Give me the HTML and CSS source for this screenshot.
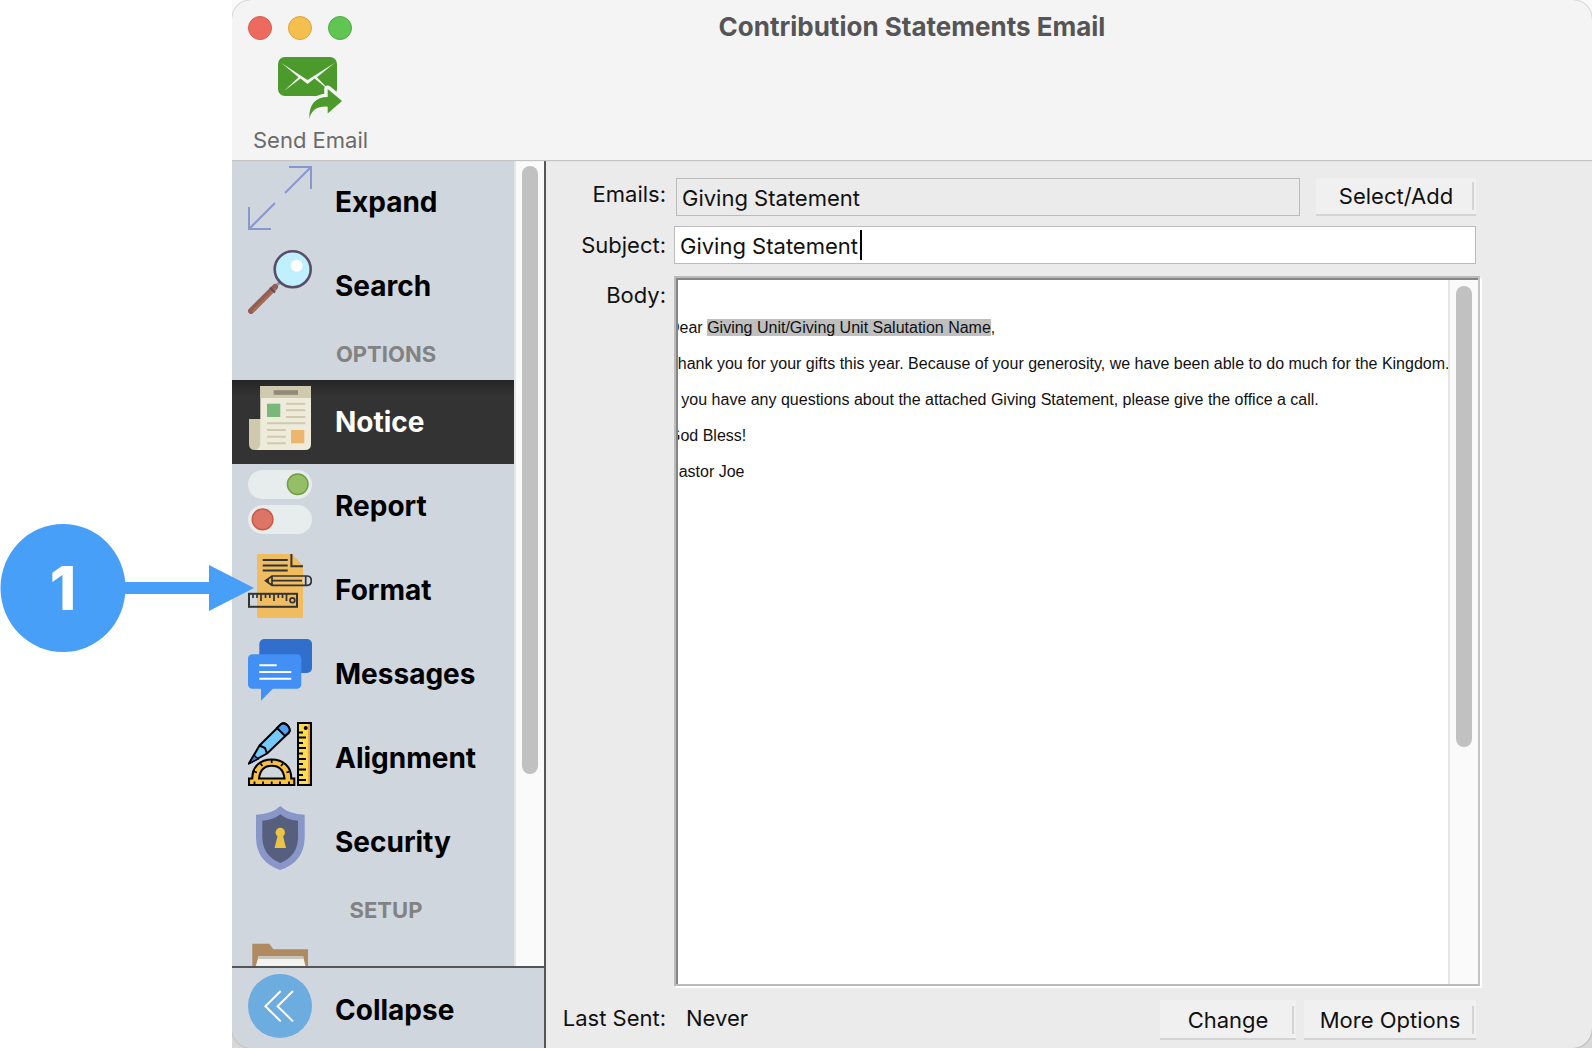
FILE: index.html
```html
<!DOCTYPE html>
<html lang="en">
<head>
    <meta charset="UTF-8">
    <meta name="viewport" content="width=device-width, initial-scale=1.0">
    <title>Contribution Statements Email</title>
    <link rel="stylesheet" href="styles.css">
</head>
<body>
    <div class="desktop">
    <div class="window">
        <header class="titlebar">
            <div class="title-row">
                <div class="lights">
                    <button type="button" class="light red" aria-label="Close"></button>
                    <button type="button" class="light yellow" aria-label="Minimize"></button>
                    <button type="button" class="light green" aria-label="Zoom"></button>
                </div>
                <h1>Contribution Statements Email</h1>
            </div>
            <button type="button" class="send">
                <svg width="66" height="64" viewBox="0 0 66 64" aria-hidden="true">
                    <rect y="1" width="59" height="39" rx="7" fill="#4b9a2b"/>
                    <path d="M3.5 7 L20.5 21.3 L6 35 L22.5 22.5 L29.5 28 L36.5 22.5 L52 35 L39 21.3 L56.5 7 L29.5 24 Z" fill="#f4f4f4"/>
                    <path d="M31.3 62.7 C31 48 38 41 49.7 41 V33 L64 45 L49.7 57.5 V50.7 C40 50 34 53 31.3 62.7 Z" fill="#f4f4f4" stroke="#f4f4f4" stroke-width="7" stroke-linejoin="round"/>
                    <path d="M31.3 62.7 C31 48 38 41 49.7 41 V33 L64 45 L49.7 57.5 V50.7 C40 50 34 53 31.3 62.7 Z" fill="#4b9a2b"/>
                </svg>
                <span>Send Email</span>
            </button>
        </header>

        <div class="content">
            <nav class="sidebar">
                <div class="list-area">
                    <div class="list">
                        <button type="button" class="item">
                            <svg class="icon" viewBox="0 0 64 64" aria-hidden="true">
                                <path d="M37 27 L63 1 M41 1 H63 V23 M27 37 L1 63 M1 41 V63 H23" fill="none" stroke="#8997cd" stroke-width="2"/>
                            </svg>
                            <span>Expand</span>
                        </button>
                        <button type="button" class="item">
                            <svg class="icon" viewBox="0 0 64 64" aria-hidden="true">
                                <path d="M32 32 L27 37" stroke="#9698a3" stroke-width="3"/>
                                <path d="M27 37 L3 61" stroke="#955c52" stroke-width="6" stroke-linecap="round"/>
                                <path d="M27 39 L5 61" stroke="#a96c58" stroke-width="2" stroke-linecap="round"/>
                                <path d="M22 37.5 L27 42.5" stroke="#594e67" stroke-width="2"/>
                                <circle cx="44.7" cy="19.3" r="18" fill="#c0effd" stroke="#594e67" stroke-width="2.6"/>
                                <circle cx="48.7" cy="15.7" r="6" fill="#fff"/>
                            </svg>
                            <span>Search</span>
                        </button>
                        <h2>OPTIONS</h2>
                        <button type="button" class="item active" aria-current="page">
                            <svg class="icon" viewBox="0 0 64 64" aria-hidden="true">
                                <path d="M1 33 H14 V64 H7 Q1 64 1 58 Z" fill="#cec9af"/>
                                <path d="M12.3 0 H63 V58 Q63 64 57 64 H8 Q12.3 62 12.3 57 Z" fill="#eeebdb"/>
                                <path d="M12.3 0 H63 V12 H12.3 Z" fill="#cec9af"/>
                                <path d="M25.7 6.5 H50" stroke="#928a76" stroke-width="4.6"/>
                                <rect x="19" y="17.7" width="13.3" height="13.3" fill="#7ab77b"/>
                                <rect x="43" y="44" width="13.3" height="13.3" fill="#ecb66c"/>
                                <path d="M38 17.7 H57.3 M38 24.3 H57.3 M38 31 H57.3 M19 37.3 H57.3 M19 44 H37.7 M19 50.7 H37.7 M19 57.3 H37.7" stroke="#cec9af" stroke-width="2"/>
                            </svg>
                            <span>Notice</span>
                        </button>
                        <button type="button" class="item">
                            <svg class="icon" viewBox="0 0 64 64" aria-hidden="true">
                                <rect width="64" height="29" rx="14.5" fill="#e7ecec"/>
                                <rect y="35" width="64" height="29" rx="14.5" fill="#e7ecec"/>
                                <circle cx="49.7" cy="14.3" r="10.3" fill="#95bf67" stroke="#719d45" stroke-width="1.5"/>
                                <circle cx="14.6" cy="49.4" r="10.3" fill="#dd7567" stroke="#c95a4b" stroke-width="1.5"/>
                            </svg>
                            <span>Report</span>
                        </button>
                        <button type="button" class="item">
                            <svg class="icon" viewBox="0 0 64 64" aria-hidden="true">
                                <path d="M9 0 H44 L55 11.5 V64 H9 Z" fill="#efbc60"/>
                                <path d="M14.7 6 H39.7 M14.7 11.4 H39.7 M14.7 16.6 H39.7 M43.4 0 V12.3 H55" fill="none" stroke="#333" stroke-width="2"/>
                                <path d="M24 22 H59 Q63.3 22 63.3 26.7 Q63.3 31.3 59 31.3 H24 L17.5 26.7 Z M24 22 V31.3 M57.7 22 V31.3 M24 26.7 H54" fill="none" stroke="#333" stroke-width="1.7"/>
                                <path d="M17 26.7 L21 24 V29.4 Z" fill="#333"/>
                                <rect x="1" y="39.8" width="48" height="13" fill="none" stroke="#333" stroke-width="2"/>
                                <path d="M5 40 V44 M9 40 V44 M13 40 V47 M17.5 40 V44 M21.8 40 V44 M26 40 V47 M30.3 40 V44 M34.5 40 V44 M38.5 40 V47" stroke="#333" stroke-width="1.7"/>
                                <circle cx="44.4" cy="46.3" r="2.4" fill="none" stroke="#333" stroke-width="1.7"/>
                            </svg>
                            <span>Format</span>
                        </button>
                        <button type="button" class="item">
                            <svg class="icon" viewBox="0 0 64 64" aria-hidden="true">
                                <rect x="11.3" y="1" width="52.7" height="34" rx="5" fill="#326fcd"/>
                                <rect y="16.3" width="53.3" height="34.4" rx="4.5" fill="#428ff5"/>
                                <path d="M13 50 H25.5 L13 62.7 Z" fill="#428ff5"/>
                                <path d="M11.3 27.3 H28.7 M11.3 34 H43.3 M11.3 40.7 H43.3" stroke="#fff" stroke-width="2"/>
                            </svg>
                            <span>Messages</span>
                        </button>
                        <button type="button" class="item">
                            <svg class="icon" viewBox="0 0 64 64" aria-hidden="true">
                                <rect x="50" y="1" width="13" height="62" fill="#fbdc4c"/>
                                <path d="M60 1 H63 V63 H60 Z" fill="#f2a23c"/>
                                <rect x="50" y="1" width="13" height="62" fill="none" stroke="#000" stroke-width="2"/>
                                <path d="M50 10.5 H55 M50 15.5 H58 M50 21 H55 M50 26 H58 M50 31.5 H55 M50 37 H58 M50 42 H55 M50 47.5 H58 M50 53 H55 M50 58 H58" stroke="#000" stroke-width="1.8"/>
                                <circle cx="57.7" cy="6" r="2" fill="#000"/>
                                <path d="M1 41.5 L11.5 23.5 L33 2.3 Q36 0 39.5 3.5 Q43 7 41 10.5 L19 31.5 Z" fill="#75c9fb" stroke="#000" stroke-width="2" stroke-linejoin="round"/>
                                <path d="M29 6 L33 2.3 Q36 0 39.5 3.5 Q43 7 41 10.5 L37 14 Z" fill="#4f9ff5" stroke="#000" stroke-width="2"/>
                                <path d="M1 41.5 L6 33 L10 37 Z" fill="#3b82e5" stroke="#000" stroke-width="1.5"/>
                                <path d="M11.5 23.5 L17 26 L19 31.5" fill="none" stroke="#000" stroke-width="2"/>
                                <path d="M1 63 V56.5 H4.3 C4 44.5 12.5 37.5 23.7 37.5 C35 37.5 43.5 44.5 43.2 56.5 H46.3 V63 Z M11 56.5 H36.5 C35.5 47.5 30.5 43.7 23.7 43.7 C17 43.7 12 47.5 11 56.5 Z" fill="#f8c043" fill-rule="evenodd" stroke="#000" stroke-width="2"/>
                                <path d="M6.5 59.5 V63 M15 59.5 V63 M23.7 59.5 V63 M32 59.5 V63 M41 59.5 V63 M23.7 37.5 V41 M12.5 41.5 L14.5 44 M35 41.5 L33 44 M6 49.5 L9 50.5 M41.5 49.5 L38.5 50.5" stroke="#000" stroke-width="1.8"/>
                            </svg>
                            <span>Alignment</span>
                        </button>
                        <button type="button" class="item">
                            <svg class="icon" viewBox="0 0 64 64" aria-hidden="true">
                                <path d="M32.3 0 Q41 8.5 56.7 8.7 V32 Q56 56 32.3 64 Q8.5 56 8 32 V8.7 Q23.5 8.5 32.3 0 Z" fill="#8996c8"/>
                                <path d="M32.3 8.3 Q39 14 50 14.7 V32 Q49.5 50 32.3 57 Q15 50 14.3 32 V14.7 Q25.5 14 32.3 8.3 Z" fill="#575f7e"/>
                                <circle cx="32.3" cy="26.5" r="4.7" fill="#e9c445"/>
                                <path d="M29.8 29 H34.8 L38 42 H26.6 Z" fill="#e9c445"/>
                            </svg>
                            <span>Security</span>
                        </button>
                        <h2>SETUP</h2>
                        <button type="button" class="item" aria-label="Folder">
                            <svg class="icon" viewBox="0 0 64 64" aria-hidden="true">
                                <path d="M4.3 1.7 H21.3 L25.3 7.3 H60 V60 H4.3 Z" fill="#b08a60"/>
                                <path d="M10.7 14 H55 L59 30 V60 H6 V30 Z" fill="#f2f2ef"/>
                                <path d="M10.7 14 H55 L55.8 17 H10 Z" fill="#c5c5bd"/>
                            </svg>
                        </button>
                    </div>
                    <div class="track"><div class="thumb side-thumb"></div></div>
                </div>
                <button type="button" class="item collapse">
                    <svg class="icon" viewBox="0 0 64 64" aria-hidden="true">
                        <circle cx="32" cy="32" r="32" fill="#6dacdf"/>
                        <path d="M32.7 17 L17.4 32.2 L32.7 47.4 M45 17 L29.6 32.2 L45 47.4" fill="none" stroke="#fff" stroke-width="2"/>
                    </svg>
                    <span>Collapse</span>
                </button>
            </nav>

            <form class="editor">
                <div class="row emails-row">
                    <label for="emails">Emails:</label>
                    <input type="text" id="emails" value="Giving Statement" readonly>
                    <button type="button" class="btn select-btn"><span>Select/Add</span></button>
                </div>
                <div class="row">
                    <label for="subject">Subject:</label>
                    <div class="subject-field">
                        <input type="text" id="subject" value="Giving Statement">
                        <span class="caret"></span>
                    </div>
                </div>
                <div class="row body-row">
                    <label id="bodyLabel">Body:</label>
                    <div class="body-box">
                        <div class="message" contenteditable="true" role="textbox" aria-multiline="true" aria-labelledby="bodyLabel" spellcheck="false">
                            <p>Dear <mark>Giving Unit/Giving Unit Salutation Name</mark>,</p>
                            <p>Thank you for your gifts this year. Because of your generosity, we have been able to do much for the Kingdom.</p>
                            <p>If you have any questions about the attached Giving Statement, please give the office a call.</p>
                            <p>God Bless!</p>
                            <p>Pastor Joe</p>
                        </div>
                        <div class="track body-track"><div class="thumb body-thumb"></div></div>
                    </div>
                </div>
                <div class="row footer-row">
                    <span class="label">Last Sent:</span>
                    <span class="last-sent">Never</span>
                    <button type="button" class="btn change-btn"><span>Change</span></button>
                    <button type="button" class="btn more-btn"><span>More Options</span></button>
                </div>
            </form>
        </div>
    </div>
    </div>

    <!-- Step marker pointing at Format -->
    <div class="callout">
        <svg width="256" height="128" viewBox="0 0 256 128" aria-hidden="true">
            <ellipse cx="63" cy="64" rx="62.5" ry="64" fill="#489ff8"/>
            <path d="M120 58 H209 V41 L254 64 L209 87 V70 H120 Z" fill="#489ff8"/>
        </svg>
        <span>1</span>
    </div>
</body>
</html>
```
FILE: styles.css
```css
* {
    box-sizing: border-box;
}
body {
    margin: 0;
    background-color: #fff;
    font-family: Inter, "Liberation Sans", sans-serif;
    font-size: 22px;
    color: #111;
    position: relative;
}
button, input {
    font: inherit;
    color: inherit;
    margin: 0;
}
button {
    border: none;
    padding: 0;
    background: none;
    cursor: pointer;
}
.desktop {
    margin-left: 232px;
    overflow: hidden;
    background: linear-gradient(#fafafa, #d8d8d8);
}
.window {
    height: 100vh;
    display: flex;
    flex-direction: column;
    border-radius: 20px;
    overflow: hidden;
    background-color: #ebebeb;
    box-shadow: 0 0 2px #888;
}

/* Title bar */
.titlebar {
    height: 160px;
    flex: none;
    background-color: #f4f4f4;
    box-shadow: 0 1px 1px #c4c4c4;
    position: relative;
}
.title-row {
    display: grid;
    grid-template-columns: 120px 1fr 120px;
    height: 56px;
    align-items: center;
}
.title-row h1 {
    margin: 0;
    padding-bottom: 4px;
    text-align: center;
    font-size: 26px;
    font-weight: 700;
    color: #555;
}
.lights {
    display: flex;
    gap: 16px;
    padding-left: 16px;
}
.light {
    width: 24px;
    height: 24px;
    flex: none;
    border-radius: 50%;
}
.red {
    background-color: #ec6a5e;
    border: 1px solid #d85a4f;
}
.yellow {
    background-color: #f4bf4f;
    border: 1px solid #dda63c;
}
.green {
    background-color: #61c554;
    border: 1px solid #4cab40;
}
.send {
    display: flex;
    flex-direction: column;
    align-items: center;
    gap: 6px;
    margin-left: 21px;
    line-height: 28px;
    color: #6b6b6b;
}

/* Sidebar */
.content {
    flex: 1;
    min-height: 0;
    display: flex;
}
.sidebar {
    width: 314px;
    flex: none;
    display: flex;
    flex-direction: column;
    background-color: #cfd6de;
    border-right: 2px solid #555;
}
.list-area {
    flex: 1;
    min-height: 0;
    display: flex;
    overflow: hidden;
}
.list {
    flex: 1;
    overflow: hidden;
}
.item {
    display: flex;
    align-items: center;
    gap: 23px;
    width: 100%;
    height: 84px;
    padding: 0 16px;
    font-size: 28px;
    font-weight: 700;
    color: #000;
}
.icon {
    width: 64px;
    height: 64px;
    flex: none;
    align-self: flex-start;
    margin-top: 6px;
}
.active {
    background: linear-gradient(#262626, #333 16px);
    color: #fff;
}
.list h2 {
    margin: 0;
    padding-left: 26px;
    text-align: center;
    font-size: 22px;
    font-weight: 700;
    line-height: 52px;
    color: #828282;
}
.collapse {
    flex: none;
    height: 82px;
    padding-top: 4px;
    border-top: 2px solid #555;
}
.collapse .icon {
    margin-top: 2px;
}
.track {
    width: 30px;
    flex: none;
    padding: 6px 6px 0 8px;
    background-color: #fafafa;
    border-left: 2px solid #e6e6e6;
}
.thumb {
    width: 16px;
    border-radius: 8px;
    background-color: #c1c1c1;
}
.side-thumb {
    height: 76%;
    margin-left: -2px;
}

/* Email form */
.editor {
    flex: 1;
    min-width: 0;
    display: flex;
    flex-direction: column;
    padding: 18px 116px 8px 0;
}
.row {
    display: flex;
    margin-bottom: 10px;
}
.row label, .label {
    width: 120px;
    flex: none;
    margin-right: 8px;
    text-align: right;
    line-height: 38px;
}
.emails-row label {
    line-height: 32px;
}
.row input {
    flex: 1;
    min-width: 0;
    width: 100%;
    height: 38px;
    padding: 2px 5px 0 5px;
    border: 1px solid #bbb;
    border-radius: 0;
    background-color: #fff;
    outline: none;
}
.row input[readonly] {
    margin-left: 2px;
    background-color: #ebebeb;
}
.subject-field {
    flex: 1;
    height: 38px;
    position: relative;
}
.caret {
    position: absolute;
    left: 186px;
    top: 4px;
    width: 2px;
    height: 30px;
    background-color: #000;
}
.btn {
    flex: none;
    height: 40px;
    padding: 6px 2px 4px 0;
    background-color: #f0f0f0;
    border-bottom: 2px solid #d4d4d4;
}
.btn span {
    display: block;
    padding-left: 4px;
    line-height: 28px;
    border-right: 2px solid #d4d4d4;
}
.select-btn {
    width: 160px;
    height: 38px;
    margin-left: 16px;
    padding-top: 4px;
}
.body-row {
    flex: 1;
    min-height: 0;
    margin: 2px -6px 12px 0;
}
.body-box {
    flex: 1;
    min-width: 0;
    display: flex;
    background-color: #fff;
    border: 2px solid #bbb;
    border-right-color: #c4c4c4;
    box-shadow: inset 2px 2px 0 #858585, 2px 2px 0 #fff;
    margin-right: 2px;
    margin-bottom: 2px;
    padding: 2px 0 0 2px;
}
.message {
    flex: 1;
    min-width: 0;
    overflow: hidden;
    padding-top: 30px;
    font-family: "Liberation Sans", Arial, sans-serif;
    font-size: 16px;
    line-height: 36px;
    outline: none;
}
.message p {
    margin: 0 0 0 -10px;
    white-space: nowrap;
}
.message mark {
    background-color: #bfbfbf;
    color: inherit;
}
.body-track {
    padding-right: 4px;
}
.body-thumb {
    height: 66%;
    margin-left: -2px;
}
.footer-row {
    margin: 0;
}
.footer-row .label, .last-sent {
    line-height: 36px;
}
.last-sent {
    flex: 1;
    padding-left: 12px;
}
.change-btn {
    width: 136px;
}
.more-btn {
    width: 172px;
    margin-left: 8px;
}

/* Callout */
.callout {
    position: absolute;
    left: 0;
    top: 524px;
}
.callout svg {
    display: block;
}
.callout span {
    position: absolute;
    left: 0;
    top: 0;
    width: 126px;
    text-align: center;
    font-size: 60px;
    font-weight: 800;
    line-height: 128px;
    color: #fff;
}
```
